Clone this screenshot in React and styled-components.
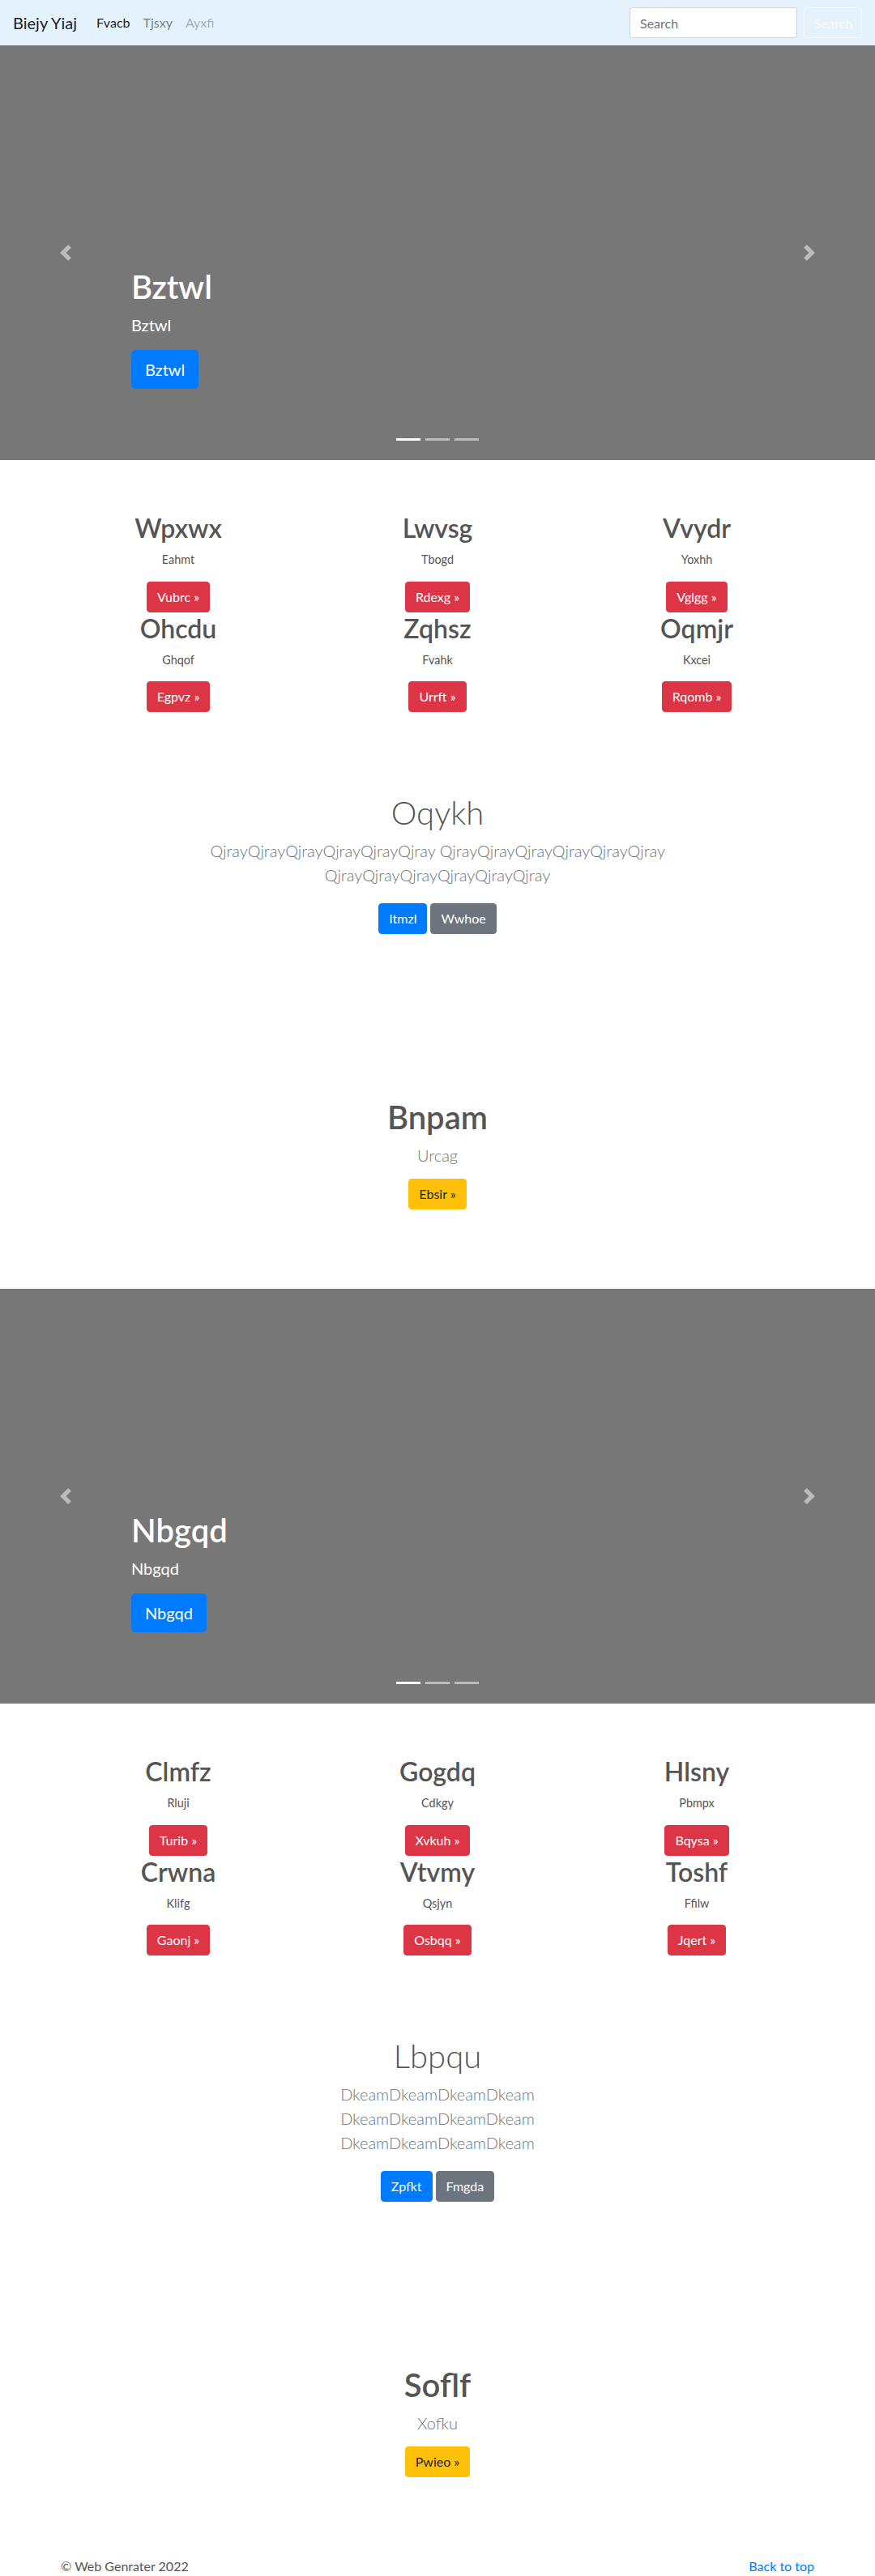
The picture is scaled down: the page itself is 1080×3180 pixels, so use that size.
import React from 'react';
import styled, { createGlobalStyle } from 'styled-components';

const GlobalStyle = createGlobalStyle`
  html, body {
    margin: 0;
    padding: 0;
    background: #fff;
  }
  body {
    font-family: Lato, "Open Sans", "Liberation Sans", sans-serif;
    color: #212529;
    font-size: 16px;
    line-height: 1.5;
  }
  * {
    box-sizing: border-box;
  }
`;

const features1 = [
  ['Wpxwx', 'Eahmt', 'Vubrc'],
  ['Lwvsg', 'Tbogd', 'Rdexg'],
  ['Vvydr', 'Yoxhh', 'Vglgg'],
  ['Ohcdu', 'Ghqof', 'Egpvz'],
  ['Zqhsz', 'Fvahk', 'Urrft'],
  ['Oqmjr', 'Kxcei', 'Rqomb'],
];

const features2 = [
  ['Clmfz', 'Rluji', 'Turib'],
  ['Gogdq', 'Cdkgy', 'Xvkuh'],
  ['Hlsny', 'Pbmpx', 'Bqysa'],
  ['Crwna', 'Klifg', 'Gaonj'],
  ['Vtvmy', 'Qsjyn', 'Osbqq'],
  ['Toshf', 'Ffilw', 'Jqert'],
];

const qjray = 'QjrayQjrayQjrayQjrayQjrayQjray';
const dkeam = 'DkeamDkeamDkeamDkeam';

function App() {
  return (
    <>
      <GlobalStyle />
      <Navbar>
        <Brand href="#">Biejy Yiaj</Brand>
        <NavList>
          <NavLink href="#" tone="active">Fvacb</NavLink>
          <NavLink href="#" tone="normal">Tjsxy</NavLink>
          <NavLink href="#" tone="disabled">Ayxfi</NavLink>
        </NavList>
        <SearchForm onSubmit={(e) => e.preventDefault()}>
          <SearchInput type="search" placeholder="Search" />
          <SearchButton type="submit">Search</SearchButton>
        </SearchForm>
      </Navbar>

      <Carousel title="Bztwl" />

      <Marketing>
        {features1.map(([title, text, btn]) => (
          <Feature key={title}>
            <FeatureTitle>{title}</FeatureTitle>
            <FeatureText>{text}</FeatureText>
            <Btn variant="danger">{btn} &raquo;</Btn>
          </Feature>
        ))}
      </Marketing>

      <Jumbo>
        <JumboTitle>Oqykh</JumboTitle>
        <Lead width={640}>
          {qjray} {qjray} {qjray}
        </Lead>
        <ButtonRow>
          <Btn variant="primary">Itmzl</Btn>
          <Btn variant="secondary">Wwhoe</Btn>
        </ButtonRow>
      </Jumbo>

      <Hero>
        <HeroTitle>Bnpam</HeroTitle>
        <HeroLead>Urcag</HeroLead>
        <Btn variant="warning">Ebsir &raquo;</Btn>
      </Hero>

      <Carousel title="Nbgqd" />

      <Marketing>
        {features2.map(([title, text, btn]) => (
          <Feature key={title}>
            <FeatureTitle>{title}</FeatureTitle>
            <FeatureText>{text}</FeatureText>
            <Btn variant="danger">{btn} &raquo;</Btn>
          </Feature>
        ))}
      </Marketing>

      <Jumbo>
        <JumboTitle>Lbpqu</JumboTitle>
        <Lead width={400}>
          {dkeam} {dkeam} {dkeam}
        </Lead>
        <ButtonRow>
          <Btn variant="primary">Zpfkt</Btn>
          <Btn variant="secondary">Fmgda</Btn>
        </ButtonRow>
      </Jumbo>

      <Hero>
        <HeroTitle>Soflf</HeroTitle>
        <HeroLead>Xofku</HeroLead>
        <Btn variant="warning">Pwieo &raquo;</Btn>
      </Hero>

      <Footer>
        <FooterText>&copy; Web Genrater 2022</FooterText>
        <FooterLink href="#">Back to top</FooterLink>
      </Footer>
    </>
  );
}

function Carousel({ title }) {
  return (
    <Slide>
      <Indicators>
        <Indicator active />
        <Indicator />
        <Indicator />
      </Indicators>
      <Control side="left">
        <svg width="20" height="20" viewBox="0 0 8 8" fill="#fff">
          <path d="M5.25 0l-4 4 4 4 1.5-1.5-2.5-2.5 2.5-2.5-1.5-1.5z" />
        </svg>
      </Control>
      <Control side="right">
        <svg width="20" height="20" viewBox="0 0 8 8" fill="#fff">
          <path d="M2.75 0l-1.5 1.5 2.5 2.5-2.5 2.5 1.5 1.5 4-4-4-4z" />
        </svg>
      </Control>
      <Caption>
        <CaptionTitle>{title}</CaptionTitle>
        <CaptionText>{title}</CaptionText>
        <CaptionAction>
          <BigBtn>{title}</BigBtn>
        </CaptionAction>
      </Caption>
    </Slide>
  );
}

const Navbar = styled.nav`
  display: flex;
  align-items: center;
  height: 56px;
  padding: 0 16px;
  background-color: #e3f2fd;
`;

const Brand = styled.a`
  font-size: 20px;
  line-height: 1.5;
  color: rgba(0, 0, 0, 0.9);
  text-decoration: none;
  margin-right: 16px;
`;

const NavList = styled.div`
  display: flex;
  align-items: center;
`;

const linkColors = {
  active: 'rgba(0, 0, 0, 0.9)',
  normal: 'rgba(0, 0, 0, 0.5)',
  disabled: 'rgba(0, 0, 0, 0.3)',
};

const NavLink = styled.a`
  padding: 8px;
  font-size: 16px;
  color: ${(p) => linkColors[p.tone]};
  text-decoration: none;
`;

const SearchForm = styled.form`
  margin-left: auto;
  display: flex;
  align-items: center;
  gap: 8px;
`;

const SearchInput = styled.input`
  width: 207px;
  height: 38px;
  padding: 6px 12px;
  font-family: inherit;
  font-size: 16px;
  color: #495057;
  background: #fff;
  border: 1px solid #ced4da;
  border-radius: 4px;
  outline: none;
  &::placeholder {
    color: #6c757d;
  }
`;

const SearchButton = styled.button`
  width: 72px;
  height: 38px;
  padding: 6px 12px;
  font-family: inherit;
  font-size: 16px;
  color: #f8f9fa;
  background: transparent;
  border: 1px solid #f8f9fa;
  border-radius: 4px;
`;

const Slide = styled.section`
  position: relative;
  height: 512px;
  margin-bottom: 64px;
  background-color: #777;
  overflow: hidden;
`;

const Indicators = styled.ol`
  position: absolute;
  left: 0;
  right: 0;
  bottom: 0;
  z-index: 15;
  display: flex;
  justify-content: center;
  list-style: none;
  padding: 0;
  margin: 0 15% 14px;
`;

const Indicator = styled.li`
  box-sizing: content-box;
  width: 30px;
  height: 3px;
  margin: 0 3px;
  background-color: #fff;
  background-clip: padding-box;
  border-top: 10px solid transparent;
  border-bottom: 10px solid transparent;
  opacity: ${(p) => (p.active ? 1 : 0.5)};
`;

const Control = styled.a`
  position: absolute;
  top: 0;
  bottom: 0;
  ${(p) => (p.side === 'left' ? 'left: 0;' : 'right: 0;')}
  width: 15%;
  display: flex;
  align-items: center;
  justify-content: center;
  opacity: 0.5;
`;

const Caption = styled.div`
  position: absolute;
  left: 15%;
  right: 15%;
  bottom: 52px;
  z-index: 10;
  padding: 20px 0;
  color: #fff;
  text-align: left;
`;

const CaptionTitle = styled.h1`
  margin: 0 0 8px;
  font-size: 40px;
  font-weight: 600;
  line-height: 1.2;
`;

const CaptionText = styled.p`
  margin: 0 0 16px;
  font-size: 20px;
  line-height: 1.5;
`;

const CaptionAction = styled.div`
  display: flex;
  margin-bottom: 16px;
`;

const BigBtn = styled.a`
  display: inline-block;
  padding: 8px 16px;
  font-size: 20px;
  line-height: 1.5;
  color: #fff;
  background-color: #007bff;
  border: 1px solid #007bff;
  border-radius: 5px;
  text-decoration: none;
`;

const Marketing = styled.section`
  width: 960px;
  margin: 0 auto;
  display: grid;
  grid-template-columns: repeat(3, 1fr);
  text-align: center;
  color: #555;
`;

const Feature = styled.div`
  display: flex;
  flex-direction: column;
  align-items: center;
  padding: 0 15px;
`;

const FeatureTitle = styled.h2`
  margin: 0 0 8px;
  font-size: 32px;
  font-weight: 600;
  line-height: 1.25;
`;

const FeatureText = styled.p`
  margin: 0 0 16px;
  font-size: 14.4px;
  line-height: 1.5;
`;

const btnColors = {
  primary: ['#007bff', '#fff'],
  secondary: ['#6c757d', '#fff'],
  danger: ['#dc3545', '#fff'],
  warning: ['#ffc107', '#212529'],
};

const Btn = styled.a`
  display: inline-block;
  height: 38px;
  padding: 6px 12px;
  font-size: 16px;
  line-height: 24px;
  color: ${(p) => btnColors[p.variant][1]};
  background-color: ${(p) => btnColors[p.variant][0]};
  border: 1px solid ${(p) => btnColors[p.variant][0]};
  border-radius: 4px;
  text-decoration: none;
  white-space: nowrap;
`;

const Jumbo = styled.section`
  padding: 100px 15px 106px;
  text-align: center;
`;

const JumboTitle = styled.h1`
  margin: 0 0 8px;
  font-size: 40px;
  font-weight: 300;
  line-height: 1.2;
  color: #555;
`;

const Lead = styled.p`
  max-width: ${(p) => p.width}px;
  margin: 0 auto 20px;
  font-size: 20px;
  font-weight: 300;
  line-height: 1.5;
  color: #6c757d;
`;

const ButtonRow = styled.div`
  display: flex;
  justify-content: center;
  gap: 4px;
`;

const Hero = styled.section`
  padding: 96px 15px 98px;
  text-align: center;
`;

const HeroTitle = styled.h1`
  margin: 0 0 8px;
  font-size: 40px;
  font-weight: 600;
  line-height: 1.2;
  color: #555;
`;

const HeroLead = styled.p`
  margin: 0 0 14px;
  font-size: 20px;
  font-weight: 300;
  line-height: 1.5;
  color: #6c757d;
`;

const Footer = styled.footer`
  width: 960px;
  margin: 0 auto;
  padding: 0 15px 16px;
  display: flex;
  justify-content: space-between;
  align-items: flex-start;
`;

const FooterText = styled.p`
  margin: 0;
  font-size: 16px;
  line-height: 1.5;
  color: #555;
`;

const FooterLink = styled.a`
  font-size: 16px;
  line-height: 1.5;
  color: #007bff;
  text-decoration: none;
`;

export default App;
